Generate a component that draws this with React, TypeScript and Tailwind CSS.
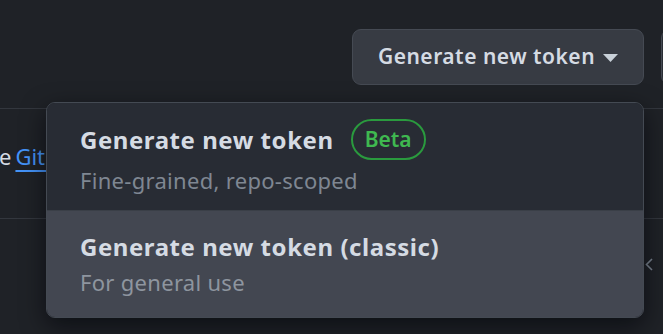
import React from 'react';

const font = { fontFamily: '"Noto Sans", "Open Sans", sans-serif' };

const MenuItem: React.FC<{ title: string; desc: string; beta?: boolean; active?: boolean }> = ({ title, desc, beta, active }) => (
    <div className={`flex flex-1 flex-col justify-center pl-[33px] ${active ? 'bg-[#434751]' : 'bg-[#282c34]'}`}>
        <div className="flex items-center gap-[17px]">
            <span className="text-[24px] font-bold leading-[30px] text-[#d5dbe3] tracking-[0.55px]">{title}</span>
            {beta && (
                <span className="flex h-[41px] w-[75px] items-center justify-center rounded-full border-2 border-[#2a9a3e] text-[21px] font-semibold text-[#3fb950]">
                    Beta
                </span>
            )}
        </div>
        <span className={`mt-[7px] text-[22px] leading-[26px] tracking-[0.3px] ${active ? 'text-[#8e959f]' : 'text-[#7f8792]'}`}>{desc}</span>
    </div>
);

export default function App() {
    return (
        <div className="relative flex h-[334px] w-[663px] flex-col overflow-hidden bg-[#1f2227]" style={font}>
            {/* header with actions */}
            <div className="flex h-[109px] shrink-0 items-start justify-end gap-[17px] border-b border-[#33373e] pt-[29px] -mr-[38px]">
                <button className="flex h-[56px] w-[292px] items-center justify-center gap-[8px] rounded-[9px] border border-[#454a53] bg-[#373b43] text-[21px] font-semibold text-[#d5dbe3] tracking-[0.5px]">
                    Generate new token
                    <svg width="15" height="8" viewBox="0 0 15 8" className="mt-[1px]">
                        <path d="M0 0h15L7.5 8z" fill="#c9d1d9" />
                    </svg>
                </button>
                <div className="h-[56px] w-[40px] rounded-[9px] border border-[#454a53] bg-[#2a2e35]" />
            </div>

            {/* description row */}
            <div className="flex h-[110px] shrink-0 items-center border-b border-[#33373e] -ml-[1px] pb-[14px]">
                <p className="whitespace-nowrap text-[22px] text-[#d5dbe3]">
                    e<span className="ml-[4px]" /><a className="text-[#4493f8] underline underline-offset-[5px] decoration-2">GitHub API</a>
                </p>
            </div>

            {/* pagination row */}
            <div className="flex flex-1 items-start justify-end pt-[39px] pr-[10px]">
                <svg width="8" height="13" viewBox="0 0 8 13">
                    <path d="M7 1L1.5 6.5L7 12" fill="none" stroke="#7b8591" strokeWidth="1.6" />
                </svg>
            </div>

            {/* dropdown menu */}
            <div className="absolute left-[46px] top-[102px] flex h-[216px] w-[598px] flex-col overflow-hidden rounded-[9px] border border-[#444a53] shadow-[0_8px_24px_rgba(1,4,9,0.6)]">
                <MenuItem title="Generate new token" desc="Fine-grained, repo-scoped" beta />
                <div className="h-px bg-[#3a3f47]" />
                <MenuItem title="Generate new token (classic)" desc="For general use" active />
            </div>
        </div>
    );
}
